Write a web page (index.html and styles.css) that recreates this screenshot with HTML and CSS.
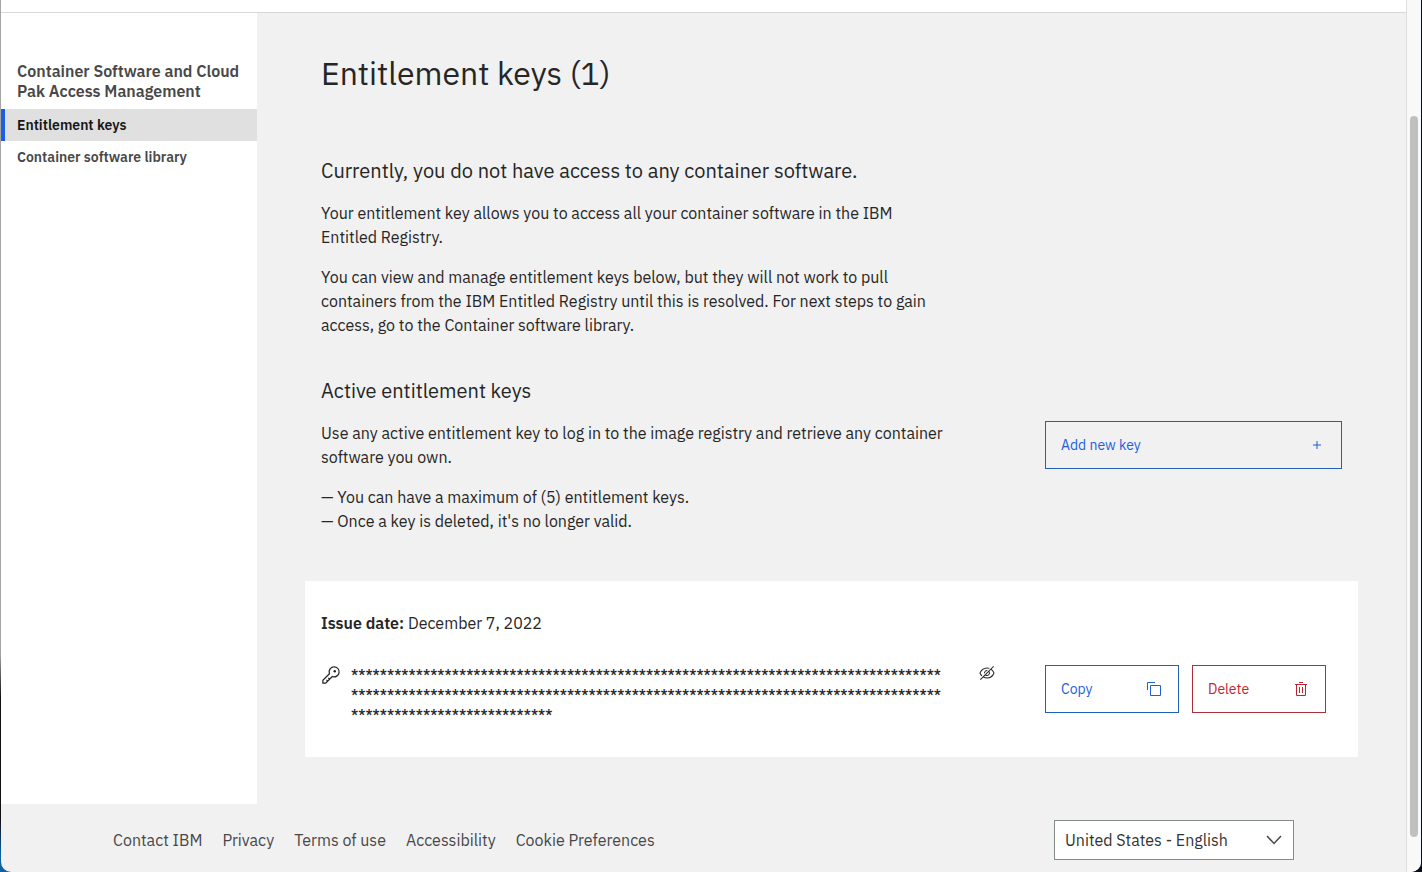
FILE: index.html
```html
<!DOCTYPE html>
<html lang="en">
<head>
<meta charset="utf-8">
<title>Entitlement keys</title>
<link rel="stylesheet" href="styles.css">
</head>
<body>
<div class="window">
  <div class="page">
    <div class="topbar"></div>
    <div class="body">
      <nav class="sidebar" aria-label="Access management">
        <h2 class="sidebar-title">Container Software and Cloud Pak Access Management</h2>
        <a class="nav-link nav-link-active" href="#keys" aria-current="page">Entitlement keys</a>
        <a class="nav-link" href="#library">Container software library</a>
      </nav>
      <main class="main">
        <section class="intro">
          <h1 class="title">Entitlement keys (1)</h1>
          <h2 class="heading">Currently, you do not have access to any container software.</h2>
          <p class="text">Your entitlement key allows you to access all your container software in the IBM Entitled Registry.</p>
          <p class="text">You can view and manage entitlement keys below, but they will not work to pull containers from the IBM Entitled Registry until this is resolved. For next steps to gain access, go to the Container software library.</p>
          <h2 class="heading heading-active">Active entitlement keys</h2>
        </section>
        <section class="columns">
          <div>
            <p class="text">Use any active entitlement key to log in to the image registry and retrieve any container software you own.</p>
            <ul class="rules">
              <li>You can have a maximum of (5) entitlement keys.</li>
              <li>Once a key is deleted, it's no longer valid.</li>
            </ul>
          </div>
          <button class="button" type="button">Add new key
            <svg width="16" height="16" viewBox="0 0 16 16" aria-hidden="true"><path d="M8 4v8M4 8h8" fill="none" stroke="currentColor" stroke-width="1"/></svg>
          </button>
        </section>
        <section class="card">
          <p class="text"><strong>Issue date:</strong> December 7, 2022</p>
          <div class="columns key-row">
            <div class="key">
              <svg width="20" height="20" viewBox="0 0 32 32" aria-hidden="true"><path fill="currentColor" d="M21 2a8.998 8.998 0 0 0-8.612 11.612L2 24v6h6l10.388-10.388A9 9 0 1 0 21 2Zm0 16a7.013 7.013 0 0 1-2.032-.302l-1.147-.348-.847.847-3.181 3.181L12.414 20 11 21.414l1.379 1.379-1.586 1.586L9.414 23 8 24.414l1.379 1.379L7.172 28H4v-3.172l9.802-9.802.848-.847-.348-1.147A7 7 0 1 1 21 18Z"/><circle cx="22" cy="10" r="2" fill="currentColor"/></svg>
              <p class="key-value">************************************************************************************************************************************************************************************************</p>
              <button class="icon-button" type="button" aria-label="Show key">
                <svg width="16" height="16" viewBox="0 0 32 32" aria-hidden="true"><path fill="currentColor" d="M5.24 22.51l1.43-1.42A14.06 14.06 0 0 1 3.07 16C5.1 10.93 10.7 7 16 7a12.38 12.38 0 0 1 4 .72l1.55-1.56A14.72 14.72 0 0 0 16 5 16.69 16.69 0 0 0 1.06 15.66a1 1 0 0 0 0 .68 16 16 0 0 0 4.18 6.17Z"/><path fill="currentColor" d="M12 15.73a4 4 0 0 1 3.7-3.7l1.81-1.82a6 6 0 0 0-7.33 7.33ZM30.94 15.66a16.4 16.4 0 0 0-5.74-7.44L30 3.41 28.59 2 2 28.59 3.41 30l5.1-5.1A15.29 15.29 0 0 0 16 27a16.69 16.69 0 0 0 14.94-10.66 1 1 0 0 0 0-.68ZM20 16a4 4 0 0 1-6 3.44L19.44 14a4 4 0 0 1 .56 2Zm-4 9a13.05 13.05 0 0 1-6-1.58l2.54-2.54a6 6 0 0 0 8.35-8.35l2.87-2.87A14.54 14.54 0 0 1 28.93 16C26.9 21.07 21.3 25 16 25Z"/></svg>
              </button>
            </div>
            <div class="actions">
              <button class="button" type="button">Copy
                <svg width="16" height="16" viewBox="0 0 32 32" aria-hidden="true"><path fill="currentColor" d="M28 10v18H10V10h18m0-2H10a2 2 0 0 0-2 2v18a2 2 0 0 0 2 2h18a2 2 0 0 0 2-2V10a2 2 0 0 0-2-2Z"/><path fill="currentColor" d="M4 18H2V4a2 2 0 0 1 2-2h14v2H4Z"/></svg>
              </button>
              <button class="button button-danger" type="button">Delete
                <svg width="16" height="16" viewBox="0 0 32 32" aria-hidden="true"><path fill="currentColor" d="M12 12h2v12h-2zM18 12h2v12h-2zM4 6v2h2v20a2 2 0 0 0 2 2h16a2 2 0 0 0 2-2V8h2V6ZM8 28V8h16v20ZM12 2h8v2h-8z"/></svg>
              </button>
            </div>
          </div>
        </section>
      </main>
    </div>
    <footer class="footer">
      <nav class="footer-links" aria-label="Footer">
        <a href="#contact">Contact IBM</a>
        <a href="#privacy">Privacy</a>
        <a href="#terms">Terms of use</a>
        <a href="#accessibility">Accessibility</a>
        <a href="#cookies">Cookie Preferences</a>
      </nav>
      <div class="locale">
        <select class="locale-select" aria-label="Country and language">
          <option>United States - English</option>
        </select>
        <svg class="locale-arrow" width="16" height="16" viewBox="0 0 16 16" aria-hidden="true"><path d="M1 4l7 7.500 7-7.500" fill="none" stroke="currentColor" stroke-width="1.500"/></svg>
      </div>
    </footer>
  </div>
  <div class="scrollbar"><div class="thumb"></div></div>
</div>
</body>
</html>
```
FILE: styles.css
```css
* {
  box-sizing: border-box;
}

body {
  margin: 0;
  background: linear-gradient(90deg, transparent 50%, #0b0f1c 50%), linear-gradient(#a5a5a8 0 75%, #101014 80% 94%, #0d62a5 98%);
  color: #262626;
  font-family: "IBM Plex Sans", Roboto, "Liberation Sans", sans-serif;
  font-size: 16px;
  line-height: 24px;
}

h1, h2, p, ul {
  margin: 0;
  padding: 0;
  font-weight: 400;
}

strong {
  font-weight: 600;
}

a {
  color: inherit;
  text-decoration: none;
}

svg {
  display: block;
  flex: none;
}

.window {
  display: flex;
  min-height: 100vh;
  margin: 0 1px;
  overflow: hidden;
  border-radius: 0 0 10px 10px;
  background: #f1f1f1;
}

.page {
  flex: 1;
  min-width: 0;
  display: flex;
  flex-direction: column;
}

.topbar {
  height: 13px;
  border-bottom: 1px solid #d8d8db;
  background: #fff;
}

.body {
  flex: 1;
  display: flex;
}

.sidebar {
  flex: none;
  width: 256px;
  padding-top: 48px;
  background: #fff;
  color: #484848;
}

.sidebar-title {
  padding: 0 16px 8px;
  font-size: 16px;
  font-weight: 600;
  line-height: 20px;
}

.nav-link {
  display: block;
  padding: 0 16px;
  font-size: 14px;
  font-weight: 600;
  line-height: 32px;
}

.nav-link-active {
  padding-left: 12px;
  border-left: 4px solid #1b5fe4;
  background: #e0e0e0;
  color: #161616;
}

.main {
  flex: 1;
  min-width: 0;
  padding: 40px 48px 47px;
}

.intro {
  padding: 0 16px;
}

.title {
  margin-bottom: 64px;
  font-size: 32px;
  line-height: 40px;
}

.heading {
  margin-bottom: 16px;
  font-size: 20px;
  line-height: 28px;
}

.heading-active {
  margin-top: 40px;
}

.text {
  max-width: 624px;
}

.text + .text,
.rules {
  margin-top: 16px;
}

.rules {
  list-style: none;
}

.rules li::before {
  content: "— ";
}

.columns {
  display: grid;
  grid-template-columns: minmax(0, 39fr) minmax(0, 16fr);
  align-items: start;
  padding: 0 16px;
}

.button {
  display: flex;
  align-items: center;
  justify-content: space-between;
  height: 48px;
  padding: 0 16px 0 15px;
  border: 1px solid #2160b8;
  background: transparent;
  color: #1b5fd9;
  font: inherit;
  font-size: 14px;
}

.button-danger {
  border-color: #a9303b;
  color: #be2430;
}

.card {
  margin-top: 48px;
  padding: 30px 0 32px;
  background: #fff;
}

.card > .text {
  padding: 0 16px;
}

.key-row {
  margin-top: 30px;
}

.key {
  display: flex;
  align-items: flex-start;
}

.key-value {
  flex: none;
  width: 592px;
  margin-left: 10px;
  font-size: 14px;
  font-weight: 500;
  line-height: 20px;
  overflow-wrap: anywhere;
}

.icon-button {
  margin: 0 0 0 36px;
  padding: 0;
  border: 0;
  background: none;
  color: #262626;
}

.actions {
  display: grid;
  grid-template-columns: 1fr 1fr;
  gap: 13px;
  padding-right: 16px;
}

.footer {
  display: flex;
  align-items: center;
  justify-content: space-between;
  padding: 16px 112px 12px;
  color: #484848;
}

.footer-links {
  display: flex;
  gap: 20px;
}

.locale {
  display: grid;
  align-items: center;
  width: 240px;
}

.locale-select,
.locale-arrow {
  grid-area: 1 / 1;
}

.locale-select {
  width: 100%;
  height: 40px;
  padding: 0 10px;
  border: 1px solid #858b8d;
  border-radius: 0;
  appearance: none;
  background: #fff;
  color: #323232;
  font: inherit;
}

.locale-arrow {
  justify-self: end;
  margin-right: 12px;
  pointer-events: none;
}

.scrollbar {
  flex: none;
  width: 15px;
  padding: 116px 3px 35px;
  border-left: 1px solid #dedee0;
  background: #f9f9f9;
  display: flex;
}

.thumb {
  flex: 1;
  border-radius: 4px;
  background: #c0c0c0;
}
```
